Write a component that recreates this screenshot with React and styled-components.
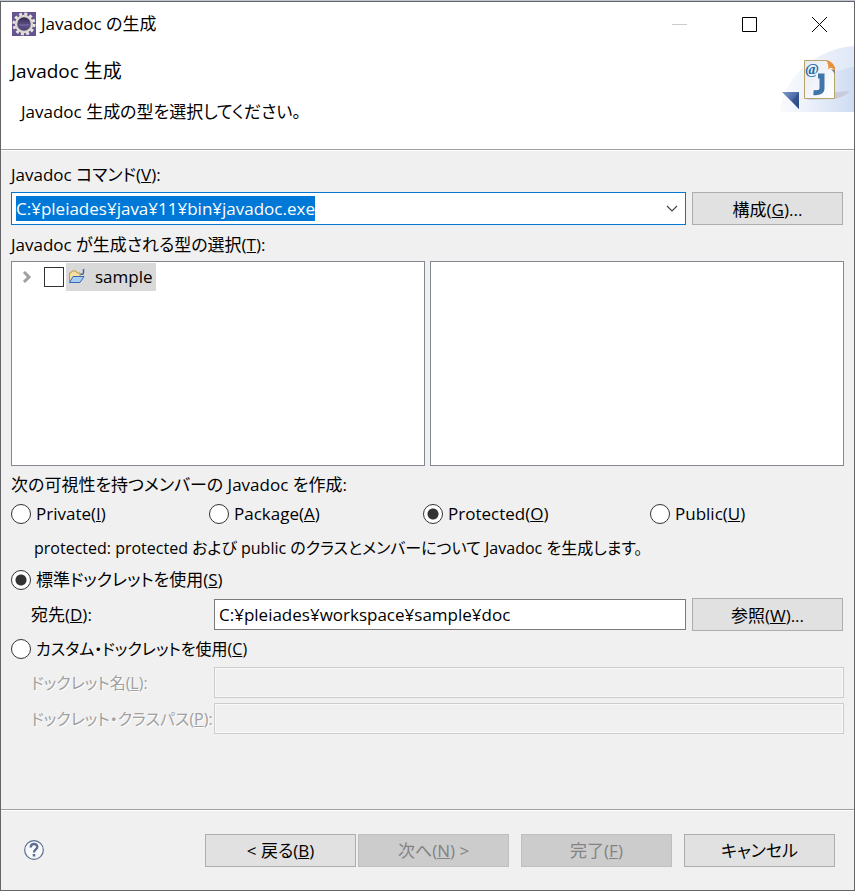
import React, { useEffect, useRef, useState } from 'react';
import styled, { createGlobalStyle, css } from 'styled-components';

const GlobalStyle = createGlobalStyle`
  *, *::before, *::after {
    box-sizing: border-box;
  }

  body {
    margin: 0;
    padding-top: 1px;
    background: #c0c5d2;
    color: #000;
    font-family: 'Open Sans', 'Noto Sans CJK JP', sans-serif;
    font-size: 17px;
    line-height: 24px;
    font-feature-settings: 'palt';
  }

  button, input {
    font: inherit;
    font-feature-settings: inherit;
    color: inherit;
  }
`;

const Dialog = styled.form`
  display: flex;
  flex-direction: column;
  min-height: calc(100vh - 1px);
  border: 1px solid #646469;
  background: #f0f0f0;
`;

const TitleBar = styled.header`
  display: flex;
  align-items: center;
  height: 44px;
  padding-left: 11px;
  background: #fff;
`;

const Title = styled.span`
  flex: 1;
  margin-left: 5px;
`;

const WindowButton = styled.button`
  display: flex;
  align-items: center;
  justify-content: center;
  width: 70px;
  height: 44px;
  padding: 0;
  border: 0;
  background: none;
`;

const Banner = styled.section`
  display: flex;
  justify-content: space-between;
  align-items: flex-start;
  height: 104px;
  padding-left: 10px;
  border-bottom: 1px solid #a0a0a0;
  background: #fff;
`;

const BannerText = styled.div`
  padding-top: 13px;
`;

const Heading = styled.h1`
  margin: 0;
  font-size: 19px;
  font-weight: 400;
  line-height: 24px;
`;

const Message = styled.p`
  margin: 17px 0 0 10px;
`;

const Body = styled.main`
  flex: 1;
  padding: 12px 10px;
  border-top: 1px solid #fff;
`;

const Label = styled.label`
  display: block;
  padding-left: ${({ $indent }) => ($indent ? '20px' : 0)};
  font-size: ${({ $small }) => ($small ? '16px' : '17px')};
  white-space: nowrap;

  ${({ $muted }) =>
    $muted &&
    css`
      color: #a0a0a0;
      text-shadow: 1px 1px 0 #fff;
    `}
`;

const FieldRow = styled.div`
  display: grid;
  grid-template-columns: ${({ $labelled }) => ($labelled ? '203px 1fr' : '1fr')} ${({ $action }) =>
      $action ? '152px' : ''};
  align-items: center;
`;

const CommandRow = styled(FieldRow)`
  margin: 5px 0 8px;
`;

const Combo = styled.div`
  display: flex;
  align-items: center;
  height: 33px;
  margin-right: 6px;
  padding-left: 4px;
  border: 1px solid #0078d7;
  background: #fff;
`;

const ComboInput = styled.input`
  flex: 1;
  min-width: 0;
  height: 25px;
  padding: 0;
  border: 0;
  outline: 0;
  background: none;
  line-height: 25px;

  &::selection {
    background: #0078d7;
    color: #fff;
  }
`;

const ComboArrow = styled.button`
  display: flex;
  align-items: center;
  justify-content: center;
  width: 26px;
  height: 31px;
  padding: 0;
  border: 0;
  background: none;
`;

const TextField = styled.input`
  min-width: 0;
  height: 31px;
  margin-right: ${({ $wide }) => ($wide ? 0 : '6px')};
  padding: 0 4px;
  border: 1px solid #7a7a7a;
  border-radius: 0;
  outline: 0;
  background: #fff;

  &:disabled {
    border-color: #ccc;
    background: #f0f0f0;
    box-shadow: inset 0 0 0 1px #f8f8f8;
  }
`;

const PushButton = styled.button`
  width: 151px;
  height: 33px;
  padding: 2px 0 0;
  border: 1px solid #adadad;
  background: #e1e1e1;

  &:disabled {
    border-color: #bfbfbf;
    background: #ccc;
    color: #838383;
  }
`;

const Panes = styled.div`
  display: grid;
  grid-template-columns: 1fr 1fr;
  gap: 5px;
  margin: 4px 0 7px;
`;

const Pane = styled.div`
  height: 205px;
  padding: 1px;
  border: 1px solid #828790;
  background: #fff;
`;

const TreeItem = styled.div`
  display: flex;
  align-items: center;
  height: 28px;
  padding-left: 9px;
`;

const TreeCheck = styled.input`
  appearance: none;
  width: 20px;
  height: 20px;
  margin: 0 2px 0 11px;
  border: 1px solid #333;
  background: #fff;
`;

const TreeLabel = styled.label`
  display: flex;
  align-items: center;
  gap: 9px;
  height: 28px;
  padding: 0 3px 0 2px;
  background: #d9d9d9;
`;

const RadioRow = styled.div`
  display: grid;
  grid-template-columns: 198fr 214fr 227fr 194fr;
  margin-top: 5px;
`;

const RadioLabel = styled.label`
  display: flex;
  align-items: center;
  gap: 5px;
  height: 24px;
  font-size: ${({ $small }) => ($small ? '16px' : '17px')};
`;

const RadioInput = styled.input`
  appearance: none;
  width: 20px;
  height: 20px;
  margin: 0;
  border: 1px solid #333;
  border-radius: 50%;
  background: #fff;

  &:checked {
    background: radial-gradient(circle, #333 5px, #fff 6px);
  }
`;

const Hint = styled.p`
  margin: 10px 0 8px 23px;
  font-size: 16px;
`;

const Fields = styled.div`
  display: grid;
  gap: 5px;
  margin: 6px 0;
`;

const Footer = styled.footer`
  display: flex;
  align-items: center;
  height: 81px;
  padding: 0 19px 0 23px;
  border-top: 1px solid #a0a0a0;
  box-shadow: inset 0 1px 0 #fff;
`;

const HelpButton = styled.button`
  display: flex;
  margin-right: auto;
  padding: 0;
  border: 0;
  background: none;
`;

const ButtonGroup = styled.div`
  display: flex;
  gap: 2px;
  margin-right: 12px;
`;

const AppIcon = () => (
  <svg width="24" height="24" viewBox="0 0 24 24" aria-hidden="true">
    <defs>
      <linearGradient id="lens" x1="0" x2="0" y1="0" y2="1">
        <stop offset="0" stopColor="#2b2346" />
        <stop offset="0.55" stopColor="#5d5088" />
        <stop offset="1" stopColor="#4a3e6c" />
      </linearGradient>
    </defs>
    <rect width="24" height="24" fill="#65548f" />
    <circle cx="12" cy="12" r="10" fill="none" stroke="#e9e6df" strokeWidth="3" strokeDasharray="2.900 2.336" />
    <circle cx="12" cy="12" r="8" fill="url(#lens)" stroke="#dcd8d0" strokeWidth="2.400" />
    <path d="M7 13h10" stroke="#8478ab" strokeWidth="0.800" />
  </svg>
);

const BannerArt = () => (
  <svg width="75" height="66" viewBox="0 0 75 66" aria-hidden="true">
    <defs>
      <linearGradient id="sky" x1="0" x2="1">
        <stop offset="0" stopColor="#f9fafe" />
        <stop offset="1" stopColor="#dfe8f7" />
      </linearGradient>
      <linearGradient id="hill" x1="0" x2="1">
        <stop offset="0" stopColor="#f2f5fc" stopOpacity="0" />
        <stop offset="1" stopColor="#c9d8f0" />
      </linearGradient>
      <linearGradient id="page" x1="0" x2="1" y2="1">
        <stop offset="0" stopColor="#e4e9f3" />
        <stop offset="1" stopColor="#fff" />
      </linearGradient>
      <linearGradient id="flag" x1="0" x2="1" y2="1">
        <stop offset="0" stopColor="#7b9acb" />
        <stop offset="1" stopColor="#1f3f80" />
      </linearGradient>
    </defs>
    <path d="M1 66C3 32 38 2 75 0V66Z" fill="url(#sky)" />
    <path d="M1 66C22 42 50 24 75 21V66Z" fill="url(#hill)" opacity="0.800" />
    <path d="M27 54L57 46L70 45Q71 48 56 53Z" fill="#c9cbdc" />
    <path d="M3 46H20V63Z" fill="url(#flag)" />
    <path d="M20 46V63L13 55Z" fill="#2c4a86" opacity="0.600" />
    <path d="M25.500 14.500H48L55.500 23V52.500H25.500Z" fill="url(#page)" stroke="#b5a468" />
    <path d="M47 14C49 17 50 20 49 24C51 21 53 21 56 25V22C55 18 52 15 47 14Z" fill="#e8913a" />
    <path d="M52 23L56 28V24Z" fill="#8a8571" />
    <text x="26" y="28" fontFamily="Liberation Serif, serif" fontSize="15" fontWeight="700" fill="#1769aa">
      @
    </text>
    <path d="M39 30H43V42Q43 47.500 34.500 46.500" fill="none" stroke="#3f75a8" strokeWidth="5" />
  </svg>
);

const ProjectIcon = () => (
  <svg width="18" height="18" viewBox="0 0 18 18" aria-hidden="true">
    <path d="M1.500 14V5H3L4 3H8L9 5H12V8" fill="#f6dfa0" stroke="#c19a4d" />
    <path d="M5 8.500H16L12 14.500H1.500Z" fill="#a8cdf2" stroke="#3869b5" />
    <path d="M15.500 1V4.500Q15.500 7 12.500 6" fill="none" stroke="#44689b" strokeWidth="1.500" />
  </svg>
);

const Key = ({ children }) => (
  <>
    (<u>{children}</u>)
  </>
);

const Radio = ({ children, mnemonic, small, ...props }) => (
  <RadioLabel $small={small}>
    <RadioInput type="radio" {...props} />
    <span>
      {children}
      <Key>{mnemonic}</Key>
    </span>
  </RadioLabel>
);

const visibilities = [
  ['Private', 'I'],
  ['Package', 'A'],
  ['Protected', 'O'],
  ['Public', 'U'],
];

const App = () => {
  const commandRef = useRef(null);
  const [visibility, setVisibility] = useState('Protected');
  const [doclet, setDoclet] = useState('standard');
  const custom = doclet === 'custom';

  useEffect(() => {
    commandRef.current.focus();
    commandRef.current.select();
  }, []);

  return (
    <>
      <GlobalStyle />
      <Dialog onSubmit={(e) => e.preventDefault()}>
        <TitleBar>
          <AppIcon />
          <Title>Javadoc の生成</Title>
          <WindowButton type="button" aria-label="最小化" disabled>
            <svg width="15" height="15" stroke="#ccc">
              <path d="M0 7.500H15" />
            </svg>
          </WindowButton>
          <WindowButton type="button" aria-label="最大化">
            <svg width="15" height="15" fill="none" stroke="#000">
              <path d="M.5 .5H14.500V14.500H.5Z" />
            </svg>
          </WindowButton>
          <WindowButton type="button" aria-label="閉じる">
            <svg width="15" height="15" stroke="#000">
              <path d="M0 0L15 15M15 0L0 15" />
            </svg>
          </WindowButton>
        </TitleBar>
        <Banner>
          <BannerText>
            <Heading>Javadoc 生成</Heading>
            <Message>Javadoc 生成の型を選択してください。</Message>
          </BannerText>
          <BannerArt />
        </Banner>

        <Body>
          <Label htmlFor="command">
            Javadoc コマンド<Key>V</Key>:
          </Label>
          <CommandRow $action>
            <Combo>
              <ComboInput id="command" ref={commandRef} defaultValue="C:¥pleiades¥java¥11¥bin¥javadoc.exe" />
              <ComboArrow type="button" aria-label="コマンドの一覧">
                <svg width="12" height="7" fill="none" stroke="#444" strokeWidth="1.200">
                  <path d="M1 1L6 6L11 1" />
                </svg>
              </ComboArrow>
            </Combo>
            <PushButton type="button">
              構成<Key>G</Key>...
            </PushButton>
          </CommandRow>

          <Label as="div" id="types">
            Javadoc が生成される型の選択<Key>T</Key>:
          </Label>
          <Panes role="group" aria-labelledby="types">
            <Pane>
              <TreeItem>
                <svg width="11" height="12" fill="none" stroke="#a0a0a0" strokeWidth="3">
                  <path d="M2 1L7 6L2 11" />
                </svg>
                <TreeCheck type="checkbox" id="sample" />
                <TreeLabel htmlFor="sample">
                  <ProjectIcon />
                  sample
                </TreeLabel>
              </TreeItem>
            </Pane>
            <Pane />
          </Panes>

          <Label as="div" id="visibility">
            次の可視性を持つメンバーの Javadoc を作成:
          </Label>
          <RadioRow role="radiogroup" aria-labelledby="visibility">
            {visibilities.map(([name, mnemonic]) => (
              <Radio
                key={name}
                name="visibility"
                mnemonic={mnemonic}
                checked={visibility === name}
                onChange={() => setVisibility(name)}
              >
                {name}
              </Radio>
            ))}
          </RadioRow>
          <Hint>protected: protected および public のクラスとメンバーについて Javadoc を生成します。</Hint>

          <Radio name="doclet" mnemonic="S" checked={!custom} onChange={() => setDoclet('standard')}>
            標準ドックレットを使用
          </Radio>
          <Fields>
            <FieldRow $labelled $action>
              <Label $indent htmlFor="destination">
                宛先<Key>D</Key>:
              </Label>
              <TextField id="destination" disabled={custom} defaultValue="C:¥pleiades¥workspace¥sample¥doc" />
              <PushButton type="button" disabled={custom}>
                参照<Key>W</Key>...
              </PushButton>
            </FieldRow>
          </Fields>
          <Radio name="doclet" mnemonic="C" small checked={custom} onChange={() => setDoclet('custom')}>
            カスタム・ドックレットを使用
          </Radio>
          <Fields>
            <FieldRow $labelled>
              <Label $indent $small $muted={!custom} htmlFor="docletName">
                ドックレット名<Key>L</Key>:
              </Label>
              <TextField $wide id="docletName" disabled={!custom} />
            </FieldRow>
            <FieldRow $labelled>
              <Label $indent $small $muted={!custom} htmlFor="docletPath">
                ドックレット・クラスパス<Key>P</Key>:
              </Label>
              <TextField $wide id="docletPath" disabled={!custom} />
            </FieldRow>
          </Fields>
        </Body>

        <Footer>
          <HelpButton type="button" aria-label="ヘルプ">
            <svg width="20" height="20" viewBox="0 0 20 20" fill="none" stroke="#5c6f91">
              <circle cx="10" cy="10" r="9.300" fill="#f8f9fb" strokeWidth="1.200" />
              <path d="M6.700 7.500C6.700 3 13.500 3 13.300 7C13.200 9.500 10 9.500 10 12.500" strokeWidth="2.400" />
              <path d="M10 14V16.500" strokeWidth="2.600" />
            </svg>
          </HelpButton>
          <ButtonGroup>
            <PushButton type="button">
              &lt; 戻る<Key>B</Key>
            </PushButton>
            <PushButton type="button" disabled>
              次へ<Key>N</Key> &gt;
            </PushButton>
          </ButtonGroup>
          <ButtonGroup>
            <PushButton type="submit" disabled>
              完了<Key>F</Key>
            </PushButton>
          </ButtonGroup>
          <PushButton type="button">キャンセル</PushButton>
        </Footer>
      </Dialog>
    </>
  );
};

export default App;
